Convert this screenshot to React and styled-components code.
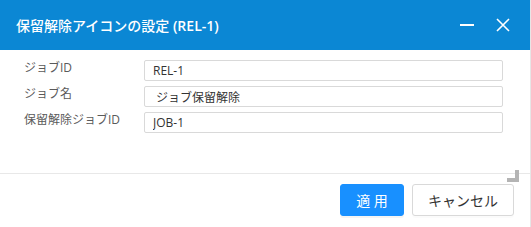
import React from 'react'
import styled, { createGlobalStyle } from 'styled-components'

const GlobalStyle = createGlobalStyle`
  html, body {
    margin: 0;
    padding: 0;
    background: #ffffff;
  }
  body {
    font-family: "Open Sans", "Noto Sans CJK JP", sans-serif;
  }
`

const fields = [
  { label: 'ジョブID', value: 'REL-1' },
  { label: 'ジョブ名', value: ' ジョブ保留解除' },
  { label: '保留解除ジョブID', value: 'JOB-1' },
]

const App = () => {
  return (
    <>
      <GlobalStyle />
      <Dialog>
        <Header>
          <Title>保留解除アイコンの設定 <Code>(REL-1)</Code></Title>
          <HeaderTools>
            <ToolButton aria-label="minimize">
              <svg width="14" height="14" viewBox="0 0 14 14">
                <rect x="0" y="6" width="14" height="2" fill="#ffffff" />
              </svg>
            </ToolButton>
            <ToolButton aria-label="close">
              <svg width="14" height="14" viewBox="0 0 14 14">
                <path d="M1 1 L13 13 M13 1 L1 13" stroke="#ffffff" strokeWidth="1.6" fill="none" />
              </svg>
            </ToolButton>
          </HeaderTools>
        </Header>
        <Body>
          <Form>
            {fields.map((f) => (
              <React.Fragment key={f.label}>
                <Label>{f.label}</Label>
                <Input readOnly value={f.value} />
              </React.Fragment>
            ))}
          </Form>
        </Body>
        <Footer>
          <Button primary>適 用</Button>
          <Button>キャンセル</Button>
        </Footer>
        <ResizeHandle />
      </Dialog>
    </>
  )
}

export default App

const Dialog = styled.div`
position: relative;
width: 530px;
height: 227px;
display: flex;
flex-direction: column;
background: #ffffff;
border-right: 1px solid #e6e6e6;
`

const Header = styled.div`
height: 50px;
flex: none;
background-color: #0b87d4;
display: flex;
align-items: center;
justify-content: space-between;
padding: 0 20px 0 16px;
`

const Title = styled.div`
color: #ffffff;
font-size: 14px;
font-weight: 500;
white-space: pre;
margin-top: -1px;
`

const Code = styled.span`
font-weight: 600;
`

const HeaderTools = styled.div`
display: flex;
align-items: center;
gap: 22px;
`

const ToolButton = styled.div`
width: 14px;
height: 14px;
display: flex;
align-items: center;
justify-content: center;
cursor: pointer;
`

const Body = styled.div`
height: 124px;
flex: none;
box-sizing: border-box;
padding: 10px 27px 0 24px;
border-bottom: 1px solid #e8e8e8;
`

const Form = styled.div`
display: grid;
grid-template-columns: 120px 1fr;
grid-auto-rows: 21px;
row-gap: 5px;
align-items: center;
`

const Label = styled.div`
font-size: 12px;
color: #5a5a5a;
line-height: 16px;
margin-top: -5px;
white-space: nowrap;
`

const Input = styled.input`
box-sizing: border-box;
height: 21px;
width: 100%;
border: 1px solid #d9d9d9;
border-radius: 2px;
padding: 0 8px;
font-family: "Open Sans", "Noto Sans CJK JP", sans-serif;
font-size: 12px;
color: #333333;
background: #ffffff;
outline: none;
white-space: pre;
`

const Footer = styled.div`
flex: 1;
display: flex;
justify-content: flex-end;
align-items: flex-start;
gap: 8px;
padding: 10px 16px 0 0;
`

const Button = styled.button`
box-sizing: border-box;
height: 32px;
width: ${(p) => (p.primary ? '64px' : '102px')};
border-radius: 3px;
border: 1px solid ${(p) => (p.primary ? '#1890ff' : '#d9d9d9')};
background: ${(p) => (p.primary ? '#1890ff' : '#ffffff')};
color: ${(p) => (p.primary ? '#ffffff' : '#333333')};
font-family: "Open Sans", "Noto Sans CJK JP", sans-serif;
font-size: 14px;
padding: 0;
cursor: pointer;
box-shadow: ${(p) => (p.primary ? '0 2px 0 rgba(0,0,0,0.045)' : '0 2px 0 rgba(0,0,0,0.015)')};
`

const ResizeHandle = styled.div`
position: absolute;
top: 170px;
right: 11px;
width: 12px;
height: 12px;
&::before, &::after {
  content: '';
  position: absolute;
  background: #b4b4b4;
}
&::before {
  right: 0;
  top: 0;
  width: 4px;
  height: 12px;
}
&::after {
  left: 0;
  bottom: 0;
  width: 12px;
  height: 4px;
}
`
